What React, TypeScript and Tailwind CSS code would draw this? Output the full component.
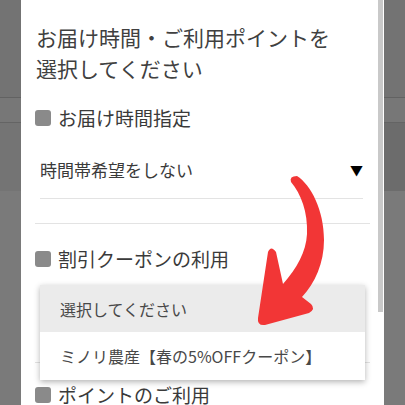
import React from "react";

const FONT = { fontFamily: '"Noto Sans CJK JP", "Noto Sans", sans-serif' };

function SideStrip({ dark }: { dark: boolean }) {
  return (
    <div className="flex w-[21px] shrink-0 flex-col">
      <div className="h-[97px] bg-[#737373]" />
      <div className="h-px bg-[#626262]" />
      <div className="h-[24px] bg-[#777777]" />
      <div className="h-px bg-[#646464]" />
      <div className={dark ? "h-[68px] bg-[#6c6c6c]" : "h-[68px] bg-[#747474]"} />
      <div className="flex-1 bg-[#7a7a7a]" />
    </div>
  );
}

function CheckLabel({ label }: { label: string }) {
  return (
    <div className="flex h-[28px] items-center gap-[7px]">
      <span className="size-[16px] shrink-0 rounded-[3px] bg-[#8a8a8a]" />
      <span className="text-[19px] leading-[28px] text-[#3a3a3a]">{label}</span>
    </div>
  );
}

function Arrow() {
  return (
    <svg
      className="pointer-events-none absolute left-0 top-0 z-20"
      width="405"
      height="405"
      viewBox="0 0 405 405"
    >
      <path
        d="M297 176 C311 185 324 210 324 240 C324 263 315 283 302 297 L311 304 Q316 309 309 313 L265 325 Q257 326 258 318 L268 252 Q271 245 276 252 L283 284 C297 268 306 252 307 234 C308 212 301 194 291 182 Q289 176 297 176 Z"
        fill="#f23636"
      />
    </svg>
  );
}

export default function App() {
  return (
    <div className="relative flex h-[405px] w-[405px] overflow-hidden" style={FONT}>
      <SideStrip dark={false} />
      <div className="relative flex-1 bg-white pl-[14px] pr-[14px]">
        {/* scrollbar thumb */}
        <div className="absolute right-px top-0 h-[312px] w-[5px] bg-[#c9c9c9]" />

        <h1 className="pl-px pt-[22px] text-[21px] leading-[31px] text-[#404040]">
          お届け時間・ご利用ポイントを
          <br />
          選択してください
        </h1>

        <div className="mt-[20px]">
          <CheckLabel label="お届け時間指定" />
        </div>

        <div className="ml-[5px] mr-[7px] mt-[24px] flex items-center justify-between border-b border-[#e3e3e3] pb-[14px]">
          <span className="text-[17px] leading-[28px] text-[#3a3a3a]">時間帯希望をしない</span>
          <span className="text-[13px] leading-[28px] text-black">▼</span>
        </div>

        <div className="mt-[24px] h-px bg-[#e3e3e3]" />

        <div className="mt-[21px]">
          <CheckLabel label="割引クーポンの利用" />
        </div>

        <div className="relative h-[90px] border-b border-[#e3e3e3]">
          <div className="absolute left-[5px] top-[12px] z-10 w-[325px] bg-white shadow-[0_2px_6px_rgba(0,0,0,0.3)]">
            <div className="flex h-[47px] items-center bg-[#ebebeb] pl-[20px] text-[16px] text-[#484848]">
              選択してください
            </div>
            <div className="flex h-[48px] items-center pl-[20px] text-[16px] text-[#484848]">
              ミノリ農産【春の5%OFFクーポン】
            </div>
          </div>
        </div>

        <div className="mt-[18px]">
          <CheckLabel label="ポイントのご利用" />
        </div>
      </div>
      <SideStrip dark={true} />
      <Arrow />
    </div>
  );
}
